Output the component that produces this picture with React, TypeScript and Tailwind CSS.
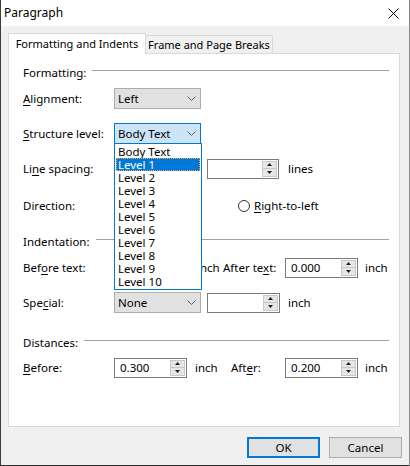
import React from "react";

function U({ children }: { children: React.ReactNode }) {
  return <span className="underline underline-offset-[2px] decoration-[1px]">{children}</span>;
}

function Chevron() {
  return (
    <svg width="9" height="5" viewBox="0 0 9 5" className="shrink-0">
      <path d="M0.5 0.5 L4.5 4.5 L8.5 0.5" fill="none" stroke="#606060" strokeWidth="1" />
    </svg>
  );
}

function Select({ value, focused }: { value?: string; focused?: boolean }) {
  return (
    <div
      className={
        focused
          ? "w-[87px] h-[21px] border border-[#0078d7] bg-[#cce4f7] flex items-center justify-between pl-[3px] pr-[4px]"
          : "w-[87px] h-[21px] border border-[#adadad] bg-[#e1e1e1] flex items-center justify-between pl-[3px] pr-[4px]"
      }
    >
      <span className="leading-none">{value ?? ""}</span>
      <Chevron />
    </div>
  );
}

function Spin({ value, wide }: { value?: string; wide?: boolean }) {
  return (
    <div
      className={
        wide
          ? "w-[73px] h-[20px] border border-[#7a7a7a] bg-white flex"
          : "w-[72px] h-[20px] border border-[#7a7a7a] bg-white flex"
      }
    >
      <div className="flex-1 flex items-center pl-[5px] pt-[1px] leading-none">{value ?? ""}</div>
      <div className="w-[15px] my-[1px] mr-[1px] border border-[#c8c8c8] bg-[#e6e6e6] flex flex-col">
        <div className="flex-1 flex items-center justify-center border-b border-[#c8c8c8]">
          <svg width="5" height="3" viewBox="0 0 5 3">
            <path d="M2.5 0 L5 3 L0 3 Z" fill="#202020" />
          </svg>
        </div>
        <div className="flex-1 flex items-center justify-center">
          <svg width="5" height="3" viewBox="0 0 5 3">
            <path d="M0 0 L5 0 L2.5 3 Z" fill="#202020" />
          </svg>
        </div>
      </div>
    </div>
  );
}

function Header({ label, mt }: { label: string; mt: string }) {
  return (
    <div className={"flex items-center h-[18px] " + mt}>
      <span className="leading-none">{label}</span>
      <div className="flex-1 h-px bg-[#a0a0a0] ml-[6px] mb-[6px]" />
    </div>
  );
}

function Radio({ children }: { children?: React.ReactNode }) {
  return (
    <div className="flex items-center">
      <div className="w-[12px] h-[12px] rounded-full border border-[#333333] bg-white" />
      <span className="ml-[4px] leading-none">{children}</span>
    </div>
  );
}

const items = ["Body Text", "Level 1", "Level 2", "Level 3", "Level 4", "Level 5", "Level 6", "Level 7", "Level 8", "Level 9", "Level 10"];

export default function App() {
  return (
    <div className="relative w-[410px] h-[466px] bg-[#f0f0f0] border-l border-r border-b border-l-[#3c3c3c] border-r-[#8a8a8a] border-b-[#2d2d2d] font-['Noto_Sans',sans-serif] text-[11.5px] text-black overflow-hidden whitespace-nowrap">
      {/* Title bar */}
      <div className="h-[26px] bg-white flex items-center justify-between pl-[3px] pr-[10px]">
        <span className="leading-none text-[12px]">Paragraph</span>
        <svg width="11" height="11" viewBox="0 0 11 11">
          <path d="M0.5 0.5 L10.5 10.5 M10.5 0.5 L0.5 10.5" stroke="#000" strokeWidth="1" />
        </svg>
      </div>

      {/* Tabs */}
      <div className="flex items-end ml-[7px] mt-[7px] h-[20px] text-[11px]">
        <div className="relative z-10 -mb-px h-[21px] w-[138px] bg-white border-t border-l border-r border-[#d9d9d9] flex items-center justify-center pb-[1px]">
          <span className="leading-none">Formatting and Indents</span>
        </div>
        <div className="h-[18px] w-[127px] bg-[#f0f0f0] border-t border-r border-[#d9d9d9] flex items-center justify-center">
          <span className="leading-none">Frame and Page Breaks</span>
        </div>
      </div>

      {/* Panel */}
      <div className="ml-[7px] w-[392px] h-[374px] bg-white border border-[#d9d9d9] pl-[14px] pr-[10px]">
        <Header label="Formatting:" mt="mt-[10px]" />

        <div className="flex items-center h-[21px] mt-[6px]">
          <span className="w-[91px] leading-none"><U>A</U>lignment:</span>
          <Select value="Left" />
        </div>

        <div className="flex items-center h-[21px] mt-[14px]">
          <span className="w-[91px] leading-none"><U>S</U>tructure level:</span>
          <Select value="Body Text" focused />
        </div>

        <div className="flex items-center h-[21px] mt-[14px]">
          <span className="w-[91px] leading-none">Li<U>n</U>e spacing:</span>
          <Select />
          <div className="ml-[6px]"><Spin /></div>
          <span className="ml-[9px] leading-none">lines</span>
        </div>

        <div className="flex items-center h-[21px] mt-[16px]">
          <span className="w-[91px] leading-none">Direction:</span>
          <div className="w-[124px]">
            <Radio />
          </div>
          <Radio><U>R</U>ight-to-left</Radio>
        </div>

        <Header label="Indentation:" mt="mt-[17px]" />

        <div className="flex items-center h-[21px] mt-[6px]">
          <span className="w-[91px] leading-none">Bef<U>o</U>re text:</span>
          <Spin wide />
          <span className="ml-[10px] w-[26px] leading-none">inch</span>
          <span className="w-[62px] leading-none">After te<U>x</U>t:</span>
          <Spin value="0.000" wide />
          <span className="ml-[7px] leading-none">inch</span>
        </div>

        <div className="flex items-center h-[21px] mt-[14px]">
          <span className="w-[91px] leading-none">Spe<U>c</U>ial:</span>
          <Select value="None" />
          <div className="ml-[6px]"><Spin wide /></div>
          <span className="ml-[8px] leading-none">inch</span>
        </div>

        <Header label="Distances:" mt="mt-[21px]" />

        <div className="flex items-center h-[21px] mt-[5px]">
          <span className="w-[91px] leading-none"><U>B</U>efore:</span>
          <Spin value="0.300" wide />
          <span className="ml-[8px] w-[36px] leading-none">inch</span>
          <span className="w-[54px] leading-none">Aft<U>e</U>r:</span>
          <Spin value="0.200" wide />
          <span className="ml-[7px] leading-none">inch</span>
        </div>
      </div>

      {/* Buttons */}
      <div className="flex justify-end mt-[10px] pr-[7px]">
        <button className="w-[73px] h-[21px] border-2 border-[#0078d7] bg-[#e1e1e1] flex items-center justify-center leading-none">
          OK
        </button>
        <button className="ml-[9px] w-[73px] h-[21px] border border-[#adadad] bg-[#e1e1e1] flex items-center justify-center leading-none">
          Cancel
        </button>
      </div>

      {/* Dropdown list (open) */}
      <div className="absolute left-[113px] top-[143px] w-[88px] border border-[#0078d7] bg-white flex flex-col py-px">
        {items.map((it) =>
          it === "Level 1" ? (
            <div key={it} className="h-[13px] mx-px bg-[#0078d7] text-white border border-dotted border-[#f0a050] flex items-center pl-[1px] leading-none">
              {it}
            </div>
          ) : (
            <div key={it} className="h-[13px] flex items-center pl-[3px] leading-none">
              {it}
            </div>
          )
        )}
      </div>
    </div>
  );
}
